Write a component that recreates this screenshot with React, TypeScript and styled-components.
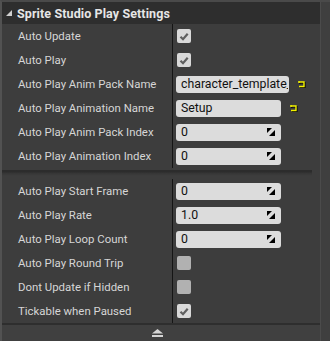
import React from "react";
import styled, { createGlobalStyle } from "styled-components";

const Global = createGlobalStyle`
  html, body { margin: 0; padding: 0; background: #3d3d3d; }
  body { font-family: Roboto, "Noto Sans", "DejaVu Sans", sans-serif; }
`;

const Panel = styled.div`
  width: 330px;
  height: 341px;
  box-sizing: border-box;
  display: grid;
  grid-template-columns: 1fr 10px;
  background: #3d3d3d;
  border-left: 2px solid #525252;
  border-top: 2px solid #4a4a4a;
  overflow: hidden;
`;

const Main = styled.div`
  display: flex;
  flex-direction: column;
  min-width: 0;
`;

const Track = styled.div`
  border-left: 1px solid #4b4b4b;
  background: #3f3f3f;
`;

const Header = styled.div`
  height: 22px;
  display: flex;
  align-items: center;
  gap: 5px;
  padding-left: 4px;
  background: #2e2e2e;
  color: #e6e6e6;
  font-size: 12.5px;
  font-weight: 700;
  letter-spacing: 0.1px;
`;

const Section = styled.div`
  display: flex;
  flex-direction: column;
`;

const Row = styled.div`
  height: 24px;
  display: grid;
  grid-template-columns: 171px 1fr;
  align-items: stretch;
`;

const Label = styled.div`
  display: flex;
  align-items: center;
  padding-left: 16px;
  color: #d6d6d6;
  font-size: 11.4px;
  white-space: nowrap;
  border-right: 1px solid #151515;
`;

const Value = styled.div`
  display: flex;
  align-items: center;
  gap: 8px;
  padding-left: 3px;
`;

const Check = styled.div<{ $on?: boolean }>`
  width: 14px;
  height: 14px;
  margin-left: 1px;
  border-radius: 2px;
  background: ${(p) => (p.$on ? "#d9d9d9" : "#b1b1b1")};
  display: flex;
  align-items: center;
  justify-content: center;
`;

const Field = styled.div<{ $w: number; $tight?: boolean }>`
  width: ${(p) => p.$w}px;
  height: 17px;
  box-sizing: border-box;
  border-radius: 3px;
  background: #dcdcdc;
  color: #111;
  font-size: 12.3px;
  display: flex;
  align-items: center;
  padding: ${(p) => (p.$tight ? "0 1px 0 5px" : "0 6px 0 5px")};
  overflow: hidden;
  white-space: nowrap;
`;

const FieldText = styled.span`
  flex: 1;
  overflow: hidden;
`;

const Divider = styled.div`
  height: 11px;
  margin-right: 8px;
  background: linear-gradient(
    to bottom,
    #3d3d3d 0px,
    #3d3d3d 2px,
    #2c2c2c 2px,
    #2c2c2c 4px,
    #353535 5px,
    #3d3d3d 8px
  );
`;

const Footer = styled.div`
  margin-top: auto;
  height: 16px;
  border-top: 2px solid #2e2e2e;
  background: #404040;
  display: flex;
  align-items: center;
  justify-content: center;
  padding-right: 8px;
`;

const Tri = () => (
  <svg width="6" height="6" viewBox="0 0 6 6">
    <polygon points="6,0 6,6 0,6" fill="#d0d0d0" />
  </svg>
);

const Tick = () => (
  <svg width="10" height="9" viewBox="0 0 10 9">
    <path d="M1.5 4.8 L4 7.2 L8.7 1.8" stroke="#5f5f5f" strokeWidth="2.2" fill="none" />
  </svg>
);

const Spin = () => (
  <svg width="8" height="8" viewBox="0 0 8 8">
    <polygon points="0,0 5,0 0,5" fill="#000" />
    <polygon points="8,8 8,2 2,8" fill="#000" />
  </svg>
);

const Reset = () => (
  <svg width="9" height="8" viewBox="0 0 9 8">
    <path d="M2 1 V3 M1.2 2 H7 V6.5 H2" stroke="#000" strokeWidth="1.4" fill="none" transform="translate(0.8 0.8)" />
    <path d="M2 1 V3 M1.2 2 H7 V6.5 H2" stroke="#f2f200" strokeWidth="1.4" fill="none" />
  </svg>
);

const Eject = () => (
  <svg width="11" height="8" viewBox="0 0 11 8">
    <polygon points="5.5,0 11,4.5 0,4.5" fill="#d4d4d4" />
    <rect x="0" y="6" width="11" height="2" fill="#d4d4d4" />
  </svg>
);

type Item =
  | { label: string; kind: "check"; on: boolean }
  | { label: string; kind: "text"; value: string; w: number; reset?: boolean }
  | { label: string; kind: "num"; value: string };

const s1: Item[] = [
  { label: "Auto Update", kind: "check", on: true },
  { label: "Auto Play", kind: "check", on: true },
  { label: "Auto Play Anim Pack Name", kind: "text", value: "character_template_", w: 113, reset: true },
  { label: "Auto Play Animation Name", kind: "text", value: "Setup", w: 105, reset: true },
  { label: "Auto Play Anim Pack Index", kind: "num", value: "0" },
  { label: "Auto Play Animation Index", kind: "num", value: "0" },
];

const s2: Item[] = [
  { label: "Auto Play Start Frame", kind: "num", value: "0" },
  { label: "Auto Play Rate", kind: "num", value: "1.0" },
  { label: "Auto Play Loop Count", kind: "num", value: "0" },
  { label: "Auto Play Round Trip", kind: "check", on: false },
  { label: "Dont Update if Hidden", kind: "check", on: false },
  { label: "Tickable when Paused", kind: "check", on: true },
];

const renderRow = (it: Item) => (
  <Row key={it.label}>
    <Label>{it.label}</Label>
    <Value>
      {it.kind === "check" && <Check $on={it.on}>{it.on && <Tick />}</Check>}
      {it.kind === "text" && (
        <>
          <Field $w={it.w} $tight>
            <FieldText>{it.value}</FieldText>
          </Field>
          {it.reset && <Reset />}
        </>
      )}
      {it.kind === "num" && (
        <Field $w={105}>
          <FieldText>{it.value}</FieldText>
          <Spin />
        </Field>
      )}
    </Value>
  </Row>
);

export default function App() {
  return (
    <>
      <Global />
      <Panel>
        <Main>
          <Header>
            <Tri />
            <span>Sprite Studio Play Settings</span>
          </Header>
          <Section>{s1.map(renderRow)}</Section>
          <Divider />
          <Section>{s2.map(renderRow)}</Section>
          <Footer>
            <Eject />
          </Footer>
        </Main>
        <Track />
      </Panel>
    </>
  );
}
